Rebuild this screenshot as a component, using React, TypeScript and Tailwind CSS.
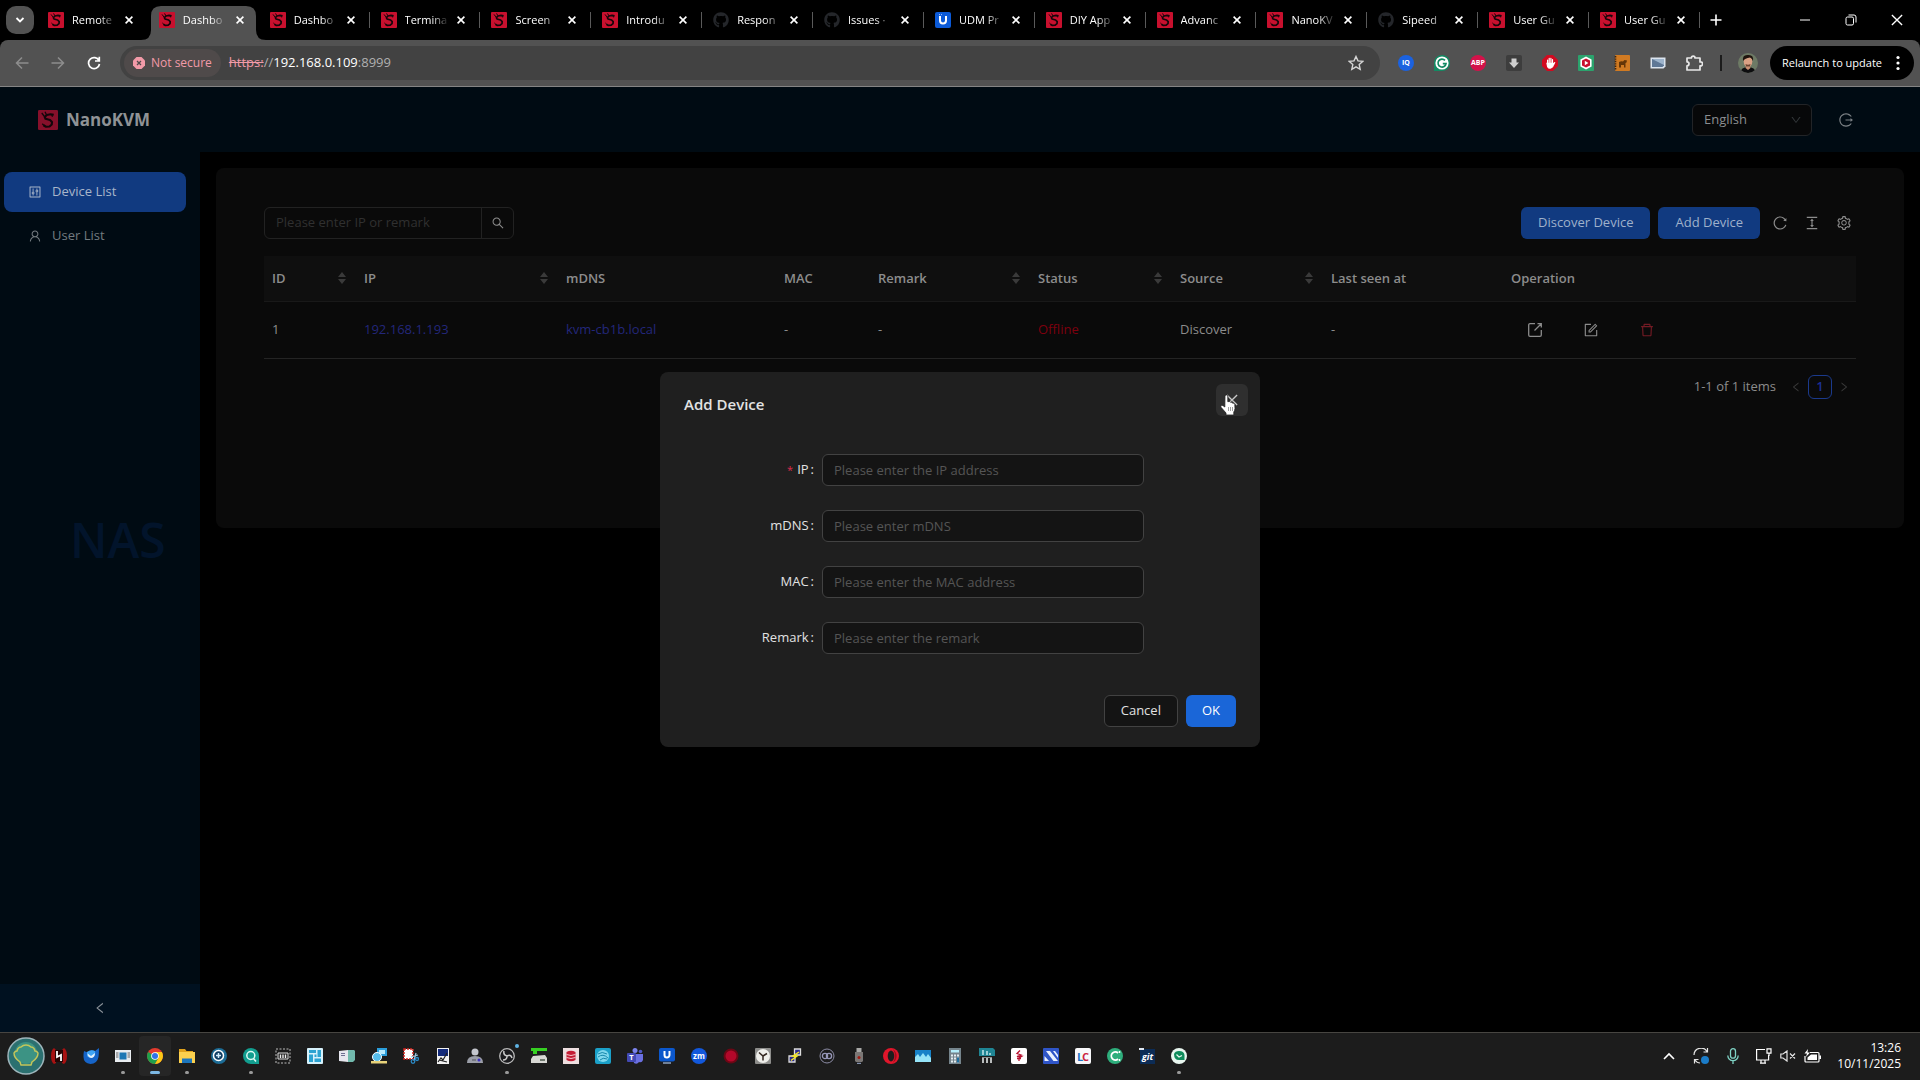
import { useState } from 'react';
import type { ReactNode } from 'react';
import {
  AiOutlineColumnHeight,
  AiOutlineControl,
  AiOutlineDelete,
  AiOutlineDown,
  AiOutlineForm,
  AiOutlineLeft,
  AiOutlineLogout,
  AiOutlineReload,
  AiOutlineRight,
  AiOutlineSearch,
  AiOutlineSetting,
  AiOutlineUser,
} from 'react-icons/ai';
import { FaGithub } from 'react-icons/fa';

// ---------- logos ----------

function SipeedLogo({ className = 'size-4', red = '#c8102e', ink = '#14060a' }: any) {
  return (
    <svg viewBox="0 0 16 16" className={className}>
      <rect width="16" height="16" rx="1" fill={red} />
      <path
        d="M12.6 3.8 10 3.4 7 4 5.4 5.6 6 7l3.6 1 1.6 1.6-.2 2-1.8 1.6-2.8.2-2-1.2"
        fill="none"
        stroke={ink}
        strokeWidth="1.7"
        strokeLinejoin="round"
      />
      <path d="M3 2.4 5 5M5.6 1.4l1.2 2.4M11 3.6l.6 1.8M3.4 11l1.4 1.4" stroke={ink} strokeWidth="1" />
    </svg>
  );
}

function UnifiLogo({ className = 'size-4' }: any) {
  return (
    <svg viewBox="0 0 16 16" className={className}>
      <rect width="16" height="16" rx="2" fill="#0b5ad8" />
      <path d="M5 4v4.6a3 3 0 0 0 6 0V4" fill="none" stroke="#fff" strokeWidth="2" />
      <path d="M4 2.6h1M6 2.6h1" stroke="#9fc4ff" />
    </svg>
  );
}

// ---------- browser ----------

const tabs = [
  { icon: 'sipeed', title: 'Remote' },
  { icon: 'sipeed', title: 'Dashbo', active: true },
  { icon: 'sipeed', title: 'Dashbo' },
  { icon: 'sipeed', title: 'Termina' },
  { icon: 'sipeed', title: 'Screen' },
  { icon: 'sipeed', title: 'Introdu' },
  { icon: 'github', title: 'Respon' },
  { icon: 'github', title: 'Issues ·' },
  { icon: 'unifi', title: 'UDM Pr' },
  { icon: 'sipeed', title: 'DIY App' },
  { icon: 'sipeed', title: 'Advanc' },
  { icon: 'sipeed', title: 'NanoKV' },
  { icon: 'github', title: 'Sipeed' },
  { icon: 'sipeed', title: 'User Gu' },
  { icon: 'sipeed', title: 'User Gu' },
];

function CrossIcon({ className = 'size-2' }: any) {
  return (
    <svg viewBox="0 0 8 8" className={className}>
      <path d="m.6.6 6.8 6.8M7.4.6.6 7.4" stroke="currentColor" strokeWidth="1.6" />
    </svg>
  );
}

function Tab({ icon, title, active, divider }: any) {
  return (
    <div className="relative flex h-10 min-w-0 flex-1 items-center px-[11px]">
      {active && (
        <svg viewBox="0 0 125 34" preserveAspectRatio="none" className="absolute bottom-0 -left-[7px] h-[34px] w-[125px]">
          <path d="M0 34q10 0 10-10V10Q10 0 20 0h85q10 0 10 10v14q0 10 10 10z" fill="#525252" />
        </svg>
      )}
      <span className="relative mr-2 shrink-0">
        {icon === 'sipeed' && <SipeedLogo />}
        {icon === 'unifi' && <UnifiLogo />}
        {icon === 'github' && <FaGithub className="size-4 text-[#24262a]" />}
      </span>
      <span className="relative min-w-0 flex-1 overflow-hidden text-[11px] whitespace-nowrap text-white [mask-image:linear-gradient(to_right,#000_55%,transparent_92%)]">
        {title}
      </span>
      <button aria-label="Close tab" className="relative flex size-4 shrink-0 items-center justify-center text-white">
        <CrossIcon />
      </button>
      {divider && <span className="absolute top-3 right-0 h-4 w-px bg-[#5a5a5a]" />}
    </div>
  );
}

function TabStrip() {
  return (
    <div className="flex h-10 items-center bg-black pl-1.5">
      <button aria-label="Search tabs" className="mr-[3px] flex size-7 shrink-0 items-center justify-center rounded-[10px] bg-[#525252]">
        <svg viewBox="0 0 10 10" className="size-2.5">
          <path d="m1.5 3 3.5 3.5L8.5 3" fill="none" stroke="#fff" strokeWidth="1.8" />
        </svg>
      </button>
      <div className="flex min-w-0 flex-1">
        {tabs.map((tab, index) => (
          <Tab key={index} {...tab} divider={index > 1} />
        ))}
      </div>
      <button aria-label="New tab" className="flex w-8 shrink-0 justify-center text-white">
        <svg viewBox="0 0 12 12" className="size-3">
          <path d="M6 .5v11M.5 6h11" stroke="currentColor" strokeWidth="1.6" />
        </svg>
      </button>
      <div className="ml-[50px] flex shrink-0 text-white">
        <button aria-label="Minimize" className="flex w-[46px] justify-center">
          <svg viewBox="0 0 12 12" className="size-3">
            <path d="M1 6h10" stroke="currentColor" />
          </svg>
        </button>
        <button aria-label="Restore" className="flex w-[46px] justify-center">
          <svg viewBox="0 0 12 12" className="size-3" fill="none" stroke="currentColor">
            <rect x="1" y="3" width="7.5" height="8" rx="1.5" />
            <path d="M3.5 1h5.5a2 2 0 0 1 2 2v5.5" />
          </svg>
        </button>
        <button aria-label="Close" className="flex w-[46px] justify-center">
          <CrossIcon className="size-3 [&_path]:[stroke-width:.9]" />
        </button>
      </div>
    </div>
  );
}

const extensions: { name: string; icon: ReactNode }[] = [
  {
    name: 'IQ',
    icon: (
      <span className="flex size-4 items-center justify-center rounded-full bg-[#1b62e0] text-[7px] font-bold text-white">IQ</span>
    ),
  },
  {
    name: 'Grammar checker',
    icon: (
      <svg viewBox="0 0 16 16" className="size-4">
        <path d="M8 0a8 8 0 0 1 8 8 8 8 0 0 1-8 8H0V8a8 8 0 0 1 8-8z" fill="#138a63" />
        <circle cx="8" cy="8" r="6.6" fill="#fff" />
        <path d="M11 5.4A4 4 0 1 0 12 8.600H8.800" fill="none" stroke="#138a63" strokeWidth="1.700" />
      </svg>
    ),
  },
  {
    name: 'Adblock',
    icon: (
      <span className="flex size-4 items-center justify-center rounded-full bg-[#d3124a] text-[7px] font-bold text-white">ABP</span>
    ),
  },
  {
    name: 'Downloader',
    icon: (
      <svg viewBox="0 0 16 16" className="size-4">
        <rect width="16" height="16" rx="2" fill="#3d3d3d" />
        <path d="M5.5 3.5h5v4H13l-5 5.5-5-5.5h2.5z" fill="#cfcfcf" />
      </svg>
    ),
  },
  {
    name: 'Blocker',
    icon: (
      <svg viewBox="0 0 16 16" className="size-4">
        <path d="M5 0h6l5 5v6l-5 5H5l-5-5V5z" fill="#d20a20" />
        <path
          d="M5.6 9V5M7.2 8V3.4M8.9 8V3.4M10.5 9V4.6M5 8.4h6.2v1.8a3 3 0 0 1-5.6 1.4zM11.5 10l1.2-2.4"
          fill="#fff"
          stroke="#fff"
          strokeWidth="1.2"
          strokeLinecap="round"
        />
      </svg>
    ),
  },
  {
    name: 'Video tools',
    icon: (
      <svg viewBox="0 0 16 16" className="size-4">
        <rect width="16" height="16" rx="1" fill="#2ba36d" />
        <path d="m8 1.4 5.6 3.2v6.8L8 14.6l-5.6-3.2V4.6z" fill="#fff" />
        <path d="m8 3.4 4 2.2v4.8l-4 2.2-4-2.2V5.6z" fill="#c8102e" />
        <path d="m6.8 5.8 3.6 2.2-3.6 2.2z" fill="#fff" />
      </svg>
    ),
  },
  {
    name: 'Notebook',
    icon: (
      <svg viewBox="0 0 16 16" className="size-4">
        <rect x="1" width="15" height="16" rx="1" fill="#d07a22" />
        <path d="M1.5 1v14" stroke="#3a2410" strokeWidth="1.6" strokeDasharray="1.4 1" />
        <path d="M5 12.500V7q2-1 4-.500L10.500 5l2.500.500-.500 2-1 .500v4.500H10V10H7v2.500z" fill="#643608" />
      </svg>
    ),
  },
  {
    name: 'Screenshot',
    icon: (
      <svg viewBox="0 0 16 16" className="size-4">
        <path d="M.5 2.5h15v9l-2 2H.5z" fill="#dbe4ee" />
        <path d="M2 4h12v6.5l-1.5 1.5H2z" fill="#5f7896" />
        <path d="m2 4 12 6V4z" fill="#9db4cc" />
      </svg>
    ),
  },
  {
    name: 'Extensions',
    icon: (
      <svg viewBox="0 0 18 18" className="size-[18px]" fill="none" stroke="#e8e8e8" strokeWidth="1.7" strokeLinejoin="round">
        <path d="M2 4h4.4a1.8 1.8 0 1 1 3.6 0H15v4a2 2 0 1 1 0 3.8V16H2v-4.2a2 2 0 0 0 0-4z" />
      </svg>
    ),
  },
];

function AddressBar() {
  return (
    <div className="bg-black">
      <div className="flex h-[47px] items-center rounded-t-lg border-b border-[#858585] bg-[#525252] pl-1">
        <button aria-label="Back" className="flex w-9 justify-center text-[#8d8d8d]">
          <svg viewBox="0 0 14 14" className="size-3.5" fill="none" stroke="currentColor" strokeWidth="1.5">
            <path d="M13.5 7H1.5M7 1.5 1.5 7 7 12.5" />
          </svg>
        </button>
        <button aria-label="Forward" className="flex w-9 justify-center text-[#8d8d8d]">
          <svg viewBox="0 0 14 14" className="size-3.5" fill="none" stroke="currentColor" strokeWidth="1.5">
            <path d="M.5 7h12M7 1.5 12.5 7 7 12.5" />
          </svg>
        </button>
        <button aria-label="Reload" className="flex w-9 justify-center text-white">
          <svg viewBox="0 0 14 14" className="size-3.5" fill="none" stroke="currentColor" strokeWidth="1.7">
            <path d="M12 4.6A5.5 5.5 0 1 0 12.500 8M12.300.8v4.200H8" />
          </svg>
        </button>
        <div className="ml-2 flex h-[34px] min-w-0 flex-1 items-center rounded-full bg-[#424242] pr-4 pl-1">
          <button className="flex h-7 items-center gap-1.5 rounded-full bg-[#4f4a4a] px-[9px] text-[12px] font-medium text-[#f29aa8]">
            <svg viewBox="0 0 12 12" className="size-3">
              <path d="M3.5 0h5L12 3.500v5L8.500 12h-5L0 8.500v-5z" fill="#f29aa8" />
              <path d="m4 4 4 4M8 4 4 8" stroke="#4f4a4a" strokeWidth="1.300" />
            </svg>
            Not secure
          </button>
          <div className="ml-2 flex-1 text-[13px] whitespace-nowrap text-[#b0b0b0]">
            <span className="text-[#f29aa8] line-through">https:</span>
            <span>//</span>
            <span className="text-white">192.168.0.109</span>
            <span>:8999</span>
          </div>
          <button aria-label="Bookmark this tab">
            <svg viewBox="0 0 16 16" className="size-4">
              <path
                d="m8 1.500 2 4.400 4.700.5-3.500 3.200 1 4.700L8 11.900l-4.200 2.400 1-4.700L1.300 6.400 6 5.900z"
                fill="none"
                stroke="#d6d6d6"
                strokeWidth="1.400"
              />
            </svg>
          </button>
        </div>
        <div className="ml-2 flex shrink-0">
          {extensions.map(({ name, icon }) => (
            <button key={name} aria-label={name} className="flex w-9 items-center justify-center">
              {icon}
            </button>
          ))}
        </div>
        <span className="mx-2 h-4 w-0.5 shrink-0 bg-[#1c1c1c]" />
        <button aria-label="Profile" className="flex w-9 shrink-0 justify-center">
          <svg viewBox="0 0 20 20" className="size-5 rounded-full">
            <rect width="20" height="20" fill="#6d7a65" />
            <path d="M2 20q1-6 8-6t8 6z" fill="#0d0d0f" />
            <path d="M8 12h4l.5 3L10 17l-2.500-2z" fill="#c98f72" />
            <ellipse cx="10" cy="8.500" rx="4.300" ry="5.500" fill="#d9a184" />
            <path d="M5 8Q4 1.500 10 2q6-.5 5 6-1-3-3-3.500Q7 5 5 8z" fill="#20150f" />
            <path d="M7.500 11q2.500 1.500 5 0l-.5 2.500H8z" fill="#6b4330" />
          </svg>
        </button>
        <button className="mr-1.5 ml-1 flex h-[34px] w-36 shrink-0 items-center justify-between rounded-full bg-black pr-3.5 pl-3 text-[11px] text-white">
          <span className="whitespace-nowrap">Relaunch to update</span>
          <svg viewBox="0 0 4 16" className="h-4 w-1" fill="#fff">
            <circle cx="2" cy="2.500" r="1.600" />
            <circle cx="2" cy="8" r="1.600" />
            <circle cx="2" cy="13.500" r="1.600" />
          </svg>
        </button>
      </div>
    </div>
  );
}

// ---------- dashboard ----------

function Header() {
  return (
    <header className="flex h-[65px] shrink-0 items-center justify-between bg-[#000b13] pr-[66px] pl-[38px]">
      <a href="#" className="flex items-center gap-2 text-[17px] font-bold text-[#8f9396]">
        <SipeedLogo className="size-5" red="#86102b" ink="#12060a" />
        NanoKVM
      </a>
      <div className="flex items-center gap-[26px]">
        <label className="relative block">
          <span className="sr-only">Language</span>
          <select className="h-8 w-[120px] appearance-none rounded-md border border-[#222427] bg-[#070809] px-[11px] text-[13px] text-[#8b8e90]">
            <option>English</option>
          </select>
          <AiOutlineDown className="pointer-events-none absolute top-2.5 right-2.5 size-3 text-[#33373a]" />
        </label>
        <button aria-label="Log out" className="text-[#7b8185]">
          <AiOutlineLogout className="size-4" />
        </button>
      </div>
    </header>
  );
}

function Sidebar() {
  return (
    <aside className="flex w-[200px] shrink-0 flex-col bg-[#000b13]">
      <nav className="flex flex-col gap-1 pt-5 pr-3.5 pl-1 text-[13px]">
        <a href="#" className="flex h-10 items-center gap-2.5 rounded-lg bg-[#113a80] px-6 text-[#a9b6ca]">
          <AiOutlineControl className="size-3.5" />
          Device List
        </a>
        <a href="#" className="flex h-10 items-center gap-2.5 rounded-lg px-6 text-[#737b80]">
          <AiOutlineUser className="size-3.5" />
          User List
        </a>
      </nav>
      <div className="flex-1 pt-[252px] pl-[70px] text-[48px] leading-[64px] font-semibold text-[#02142b]">NAS</div>
      <button aria-label="Collapse menu" className="flex h-12 shrink-0 items-center justify-center bg-[#001120] text-[#8a9299]">
        <AiOutlineLeft className="size-3.5" />
      </button>
    </aside>
  );
}

function Sorter() {
  return (
    <svg viewBox="0 0 8 12" className="h-3 w-2" fill="#3a3a3a">
      <path d="M4 0 8 5H0zM4 12 0 7h8z" />
    </svg>
  );
}

const columns = [
  { title: 'ID', width: 'w-[92px]', sortable: true },
  { title: 'IP', width: 'w-[202px]', sortable: true },
  { title: 'mDNS', width: 'w-[218px]' },
  { title: 'MAC', width: 'w-[94px]' },
  { title: 'Remark', width: 'w-[160px]', sortable: true },
  { title: 'Status', width: 'w-[142px]', sortable: true },
  { title: 'Source', width: 'w-[151px]', sortable: true },
  { title: 'Last seen at', width: 'w-[180px]' },
  { title: 'Operation', width: '' },
];

function DeviceTable() {
  return (
    <table className="mt-[17px] w-full table-fixed text-left text-[13px] text-[#8c8c8c]">
      <thead>
        <tr className="h-[45px] border-b border-[#191919] bg-[#0f0f0f]">
          {columns.map(({ title, width, sortable }) => (
            <th key={title} className={`${width} px-2 font-semibold`}>
              <span className="flex items-center justify-between pr-0.5">
                {title}
                {sortable && <Sorter />}
              </span>
            </th>
          ))}
        </tr>
      </thead>
      <tbody>
        <tr className="h-[57px] border-b border-[#242424]">
          <td className="px-2">1</td>
          <td className="px-2">
            <a href="#" className="text-[#23277a]">192.168.1.193</a>
          </td>
          <td className="px-2">
            <a href="#" className="text-[#23277a]">kvm-cb1b.local</a>
          </td>
          <td className="px-2">-</td>
          <td className="px-2">-</td>
          <td className="px-2 text-[#7e000e]">Offline</td>
          <td className="px-2">Discover</td>
          <td className="px-2">-</td>
          <td className="px-2">
            <div className="flex gap-2">
              <button aria-label="Open" className="flex w-12 justify-center">
                <svg viewBox="0 0 16 16" className="size-4" fill="none" stroke="currentColor" strokeWidth="1.300">
                  <path d="M8 1.700H3A1.300 1.300 0 0 0 1.700 3v10A1.300 1.300 0 0 0 3 14.300h10a1.300 1.300 0 0 0 1.300-1.300V8M7.500 8.500l6.500-6.500M10.500 1.700h3.800v3.800" />
                </svg>
              </button>
              <button aria-label="Edit" className="flex w-12 justify-center">
                <AiOutlineForm className="size-4" />
              </button>
              <button aria-label="Delete" className="flex w-12 justify-center text-[#741b24]">
                <AiOutlineDelete className="size-4" />
              </button>
            </div>
          </td>
        </tr>
      </tbody>
    </table>
  );
}

function DevicePanel({ onAdd }: any) {
  return (
    <section className="min-h-[360px] rounded-lg bg-[#0a0a0a] px-12 pt-[39px] text-[13px] text-[#8c8c8c]">
      <div className="flex items-center justify-between">
        <form className="flex h-8 w-[250px] rounded-md border border-[#222]">
          <input
            aria-label="Search devices"
            placeholder="Please enter IP or remark"
            className="min-w-0 flex-1 bg-transparent px-[11px] placeholder:text-[#303030]"
          />
          <button type="button" aria-label="Search" className="flex w-8 items-center justify-center border-l border-[#222]">
            <AiOutlineSearch className="size-3.5" />
          </button>
        </form>
        <div className="flex items-center gap-2">
          <button className="h-8 rounded-md bg-[#113a80] px-[17px] text-[#9fb1cb]">Discover Device</button>
          <button className="h-8 rounded-md bg-[#113a80] px-[17px] text-[#9fb1cb]" onClick={onAdd}>
            Add Device
          </button>
          <button aria-label="Refresh" className="flex w-6 justify-center">
            <AiOutlineReload className="size-4" />
          </button>
          <button aria-label="Density" className="flex w-6 justify-center">
            <AiOutlineColumnHeight className="size-4" />
          </button>
          <button aria-label="Column settings" className="flex w-6 justify-center">
            <AiOutlineSetting className="size-4" />
          </button>
        </div>
      </div>
      <DeviceTable />
      <div className="mt-4 flex items-center justify-end">
        <span className="mr-2">1-1 of 1 items</span>
        <button aria-label="Previous page" className="flex size-6 items-center justify-center text-[#3a3a3a]">
          <AiOutlineLeft className="size-3" />
        </button>
        <button className="size-6 rounded-md border border-[#1b3a8c] font-semibold text-[#1b2f94]">1</button>
        <button aria-label="Next page" className="flex size-6 items-center justify-center text-[#3a3a3a]">
          <AiOutlineRight className="size-3" />
        </button>
      </div>
    </section>
  );
}

const fields = [
  { id: 'ip', label: 'IP', placeholder: 'Please enter the IP address', required: true },
  { id: 'mdns', label: 'mDNS', placeholder: 'Please enter mDNS' },
  { id: 'mac', label: 'MAC', placeholder: 'Please enter the MAC address' },
  { id: 'remark', label: 'Remark', placeholder: 'Please enter the remark' },
];

function HandPointer() {
  return (
    <svg viewBox="0 0 17 22" className="absolute top-2.5 left-1 h-[22px] w-[17px]">
      <path
        d="M5 1.500q1.500-1.300 2.800.2v6l1.400-.2q.9 0 1.300.8 1.500-.4 2 .7 2-.2 2.300 1.300l.2 4.200q-.2 2-1.200 3.500V21H6v-2L1.200 13.500q-1-1.600.4-2.300 1-.3 3.200 1.800z"
        fill="#fff"
        stroke="#222"
        strokeWidth=".8"
      />
      <path d="M8.500 13v4M10.500 13v4M12.500 13v4" stroke="#777" strokeWidth=".7" />
    </svg>
  );
}

function AddDeviceModal({ onClose }: any) {
  return (
    <div className="absolute inset-0 flex items-center justify-center">
      <form
        role="dialog"
        aria-label="Add Device"
        className="relative w-[600px] rounded-lg bg-[#1f1f1f] px-6 py-5 text-[13px] text-[#e2e2e2]"
      >
        <h2 className="text-[15px] leading-6 font-semibold">Add Device</h2>
        <button type="button" aria-label="Close" onClick={onClose} className="absolute top-3 right-3 flex size-8 items-center justify-center rounded-md bg-[#2f2f2f] text-[#c8c8c8]">
          <CrossIcon className="size-3 [&_path]:[stroke-width:.9]" />
          <HandPointer />
        </button>
        <div className="mt-[38px] flex flex-col gap-6">
          {fields.map(({ id, label, placeholder, required }) => (
            <div key={id} className="flex items-center">
              <label htmlFor={id} className="w-[138px] pr-2 text-right">
                {required && <span className="mr-1 text-[11px] text-[#dc2c4c]">*</span>}
                {label}
                <span className="ml-0.5">:</span>
              </label>
              <input
                id={id}
                placeholder={placeholder}
                className="h-8 w-[322px] rounded-md border border-[#424242] bg-[#141414] px-[11px] placeholder:text-[#555]"
              />
            </div>
          ))}
        </div>
        <div className="mt-[41px] flex justify-end gap-2">
          <button type="button" onClick={onClose} className="h-8 rounded-md border border-[#424242] bg-[#141414] px-4">
            Cancel
          </button>
          <button type="button" className="h-8 rounded-md bg-[#1a66d8] px-4 text-white">
            OK
          </button>
        </div>
      </form>
    </div>
  );
}

// ---------- taskbar ----------

const apps: { name: string; state?: 'open' | 'active'; icon: ReactNode }[] = [
  {
    name: 'Reader',
    icon: (
      <>
        <path d="M3 0Q0 2 0 8t3 8l2-1V2zM13 0q3 2 3 8t-3 8l-2-1V2z" fill="#a81212" />
        <path d="M4 2h8v12H4z" fill="#270606" />
        <path d="M6 3v6l4-2v6" fill="none" stroke="#fff" strokeWidth="1.800" />
      </>
    ),
  },
  {
    name: 'Thunderbird',
    icon: (
      <>
        <path d="M1 3q2 1 3 1 4-3 8-1l4-3q0 5-.5 9-1.500 7-8 7Q.5 15 .5 9 .3 6 1 3z" fill="#1664c8" />
        <path d="M4 4q4-3 8-1 1 4-2 6-4 2-6-1z" fill="#3fa4f4" />
        <path d="M4.500 5.500 8 8l4-3q0 4-3 5-4 0-4.500-4.500z" fill="#e4f0fb" />
      </>
    ),
  },
  {
    name: 'Editor',
    state: 'open',
    icon: (
      <>
        <rect y="2" width="16" height="12" fill="#e9edf0" />
        <rect x="4.500" y="4.500" width="7" height="7" fill="#1e78b4" />
        <path d="M1 5h2.500M1 7h2.500M1 9h2.500M12.500 5H15M12.500 7H15M12.500 9H15" stroke="#444" strokeWidth=".8" />
      </>
    ),
  },
  {
    name: 'Chrome',
    state: 'active',
    icon: (
      <>
        <circle cx="8" cy="8" r="8" fill="#e33b2e" />
        <path d="M8 8 1.100 4A8 8 0 0 0 8 16l3.500-6z" fill="#1fa04c" />
        <path d="M8 16a8 8 0 0 0 6.900-12H8l3.500 6z" fill="#fbc816" />
        <circle cx="8" cy="8" r="3.800" fill="#fff" />
        <circle cx="8" cy="8" r="3" fill="#2f73e8" />
      </>
    ),
  },
  {
    name: 'Files',
    state: 'open',
    icon: (
      <>
        <path d="M0 1h6l1.500 2H14v3H0z" fill="#e0a21c" />
        <path d="M0 4h16v11H0z" fill="#fbd04e" />
        <path d="M3 10.500h10V15H3z" fill="#1c75bb" />
      </>
    ),
  },
  {
    name: 'Remote view',
    icon: (
      <>
        <circle cx="8" cy="8" r="8" fill="#1c6c96" />
        <circle cx="7.500" cy="7.500" r="5" fill="#0f3e63" stroke="#fff" strokeWidth="1.500" />
        <path d="M7.500 5v5M5 7.500h5" stroke="#d4eefc" strokeWidth="1.500" />
      </>
    ),
  },
  {
    name: 'Search tool',
    state: 'open',
    icon: (
      <>
        <path d="M8 0a8 8 0 0 1 8 8v8H8A8 8 0 0 1 8 0z" fill="#129e8f" />
        <circle cx="7.800" cy="7.500" r="4" fill="none" stroke="#dffaf4" strokeWidth="1.500" />
        <path d="m10.500 10.500 2.500 3" stroke="#dffaf4" strokeWidth="1.500" />
      </>
    ),
  },
  {
    name: 'Memory',
    icon: (
      <>
        <rect x="1" y="1" width="14" height="14" fill="none" stroke="#bbb" strokeDasharray="2 1.500" />
        <path d="M3 5h10v6H3z" fill="none" stroke="#ddd" />
        <path d="M5.500 10V6.500M8 10V6.500M10.500 10V6.500" stroke="#eee" strokeWidth="1.400" />
      </>
    ),
  },
  {
    name: 'Panels',
    icon: (
      <>
        <rect width="16" height="16" rx="1" fill="#d6f1fb" />
        <path d="M2 2h7v3H2zM2 6.500h4V14H2zM10.500 2H14v7h-3.500zM7.500 10.500H14V14H7.500zM7.500 6.500H9.500V9h-2z" fill="#2ba3d2" />
      </>
    ),
  },
  {
    name: 'Server',
    icon: (
      <>
        <path d="m0 3 9-1v12l-9-1z" fill="#e6e6ee" />
        <path d="M9 2h6l1 1v9l-2 2H9z" fill="#71b9ad" />
        <path d="M2 5.500h4M2 7.500h4" stroke="#6f6f92" />
      </>
    ),
  },
  {
    name: 'Remote desktop',
    icon: (
      <>
        <path d="M6 0h10v8H6z" fill="#2b9edb" />
        <path d="M8 2h6v4H8z" fill="#b8ecff" />
        <circle cx="6" cy="9" r="4.500" fill="#57bdea" stroke="#fff" />
        <path d="M0 13h16v2.500H0z" fill="#e8d27a" />
      </>
    ),
  },
  {
    name: 'Snipping',
    icon: (
      <>
        <rect x="1" y="1" width="9" height="10" fill="#fff" stroke="#d4261f" strokeWidth="1.500" strokeDasharray="2 1" />
        <path d="m8 9 7-2M11 13l2-8" stroke="#9bc3da" strokeWidth="1.300" />
        <circle cx="10" cy="13.500" r="1.800" fill="none" stroke="#2a88c4" strokeWidth="1.300" />
        <circle cx="14" cy="11" r="1.500" fill="none" stroke="#2a88c4" strokeWidth="1.300" />
      </>
    ),
  },
  {
    name: 'Paint',
    icon: (
      <>
        <rect x="2" width="12" height="16" fill="#f2f2f2" />
        <path d="M3 1h10v7H3z" fill="#132a7a" />
        <path d="m3 14 3-4 2 2 4-7M4 12l8 2" stroke="#222" strokeWidth="1.200" fill="none" />
      </>
    ),
  },
  {
    name: 'Users',
    icon: (
      <>
        <circle cx="8" cy="4" r="3.500" fill="#c4c6cd" />
        <path d="M0 15q0-7 8-7t8 7z" fill="#9b9ea8" />
        <circle cx="12" cy="12" r="1.500" fill="#3d33c4" />
        <path d="M5 12h4" stroke="#50525c" />
      </>
    ),
  },
  {
    name: 'OBS',
    state: 'open',
    icon: (
      <>
        <circle cx="8" cy="8" r="7.300" fill="#1b1b1e" stroke="#b9b9b9" strokeWidth="1.300" />
        <path d="M8 8q-4-1-3-5M8 8q4-2 5 2M8 8q0 4-4 4" fill="none" stroke="#c9c9c9" strokeWidth="1.500" />
      </>
    ),
  },
  {
    name: 'Drive',
    icon: (
      <>
        <path d="M0 0h16v3H6v3H2V3H0z" fill="#36d022" />
        <path d="m2 8 12-1 2 3v5H0v-4z" fill="#d8d8d4" />
        <path d="M9 12h5" stroke="#4c5a4c" strokeWidth="1.500" />
      </>
    ),
  },
  {
    name: 'Database',
    icon: (
      <>
        <rect width="16" height="16" fill="#eedfe0" />
        <path d="M3.500 4q4.500-2.500 9 0v8q-4.500 2.500-9 0z" fill="#c41c34" />
        <path d="M3.500 6.500q4.500 2 9 0M3.500 9.500q4.500 2 9 0" fill="none" stroke="#f4c4ca" />
      </>
    ),
  },
  {
    name: 'Globe',
    icon: (
      <>
        <rect width="16" height="16" rx="2" fill="#1ba0c8" />
        <circle cx="8" cy="8" r="6" fill="#7fd8ee" />
        <path d="M3 6q4-3 9 0M3 9q5-4 10 1M5 12q3-3 7-1" fill="none" stroke="#1788ac" />
      </>
    ),
  },
  {
    name: 'Teams',
    icon: (
      <>
        <circle cx="8" cy="2.500" r="2.500" fill="#7b83eb" />
        <circle cx="13.500" cy="3.500" r="1.800" fill="#5059c9" />
        <path d="M5 6h11v6q-1 3-4 2-2 3-5 1z" fill="#6a6fe0" />
        <rect y="5" width="9" height="9" rx="1" fill="#4349b4" />
        <text x="4.500" y="12" fontSize="7.500" fontWeight="700" textAnchor="middle" fill="#fff">T</text>
      </>
    ),
  },
  {
    name: 'UniFi',
    icon: (
      <>
        <rect width="16" height="13.500" rx="2" fill="#0b57cc" />
        <path d="M5.500 3v4a2.500 2.500 0 0 0 5 0V3" fill="none" stroke="#fff" strokeWidth="2" />
        <path d="M4 15h8" stroke="#9fb8dc" strokeWidth="1.300" />
      </>
    ),
  },
  {
    name: 'Zoom',
    icon: (
      <>
        <circle cx="8" cy="8" r="8" fill="#1258dc" />
        <text x="8" y="10.500" fontSize="8" fontWeight="700" textAnchor="middle" fill="#fff">zm</text>
      </>
    ),
  },
  {
    name: 'Recorder',
    icon: (
      <>
        <circle cx="8" cy="8" r="7.500" fill="#6b0715" />
        <circle cx="8" cy="8" r="5.500" fill="#b3082a" />
      </>
    ),
  },
  {
    name: 'Clock',
    icon: (
      <>
        <rect width="16" height="16" rx="1" fill="#8d8d8b" />
        <circle cx="8" cy="8" r="7" fill="#eeeeea" />
        <path d="M4 4.500 8 8l4-2.500M8 8v4.500" fill="none" stroke="#33261f" strokeWidth="1.500" />
      </>
    ),
  },
  {
    name: 'PuTTY',
    icon: (
      <>
        <path d="M7.500 1h6v6h-6zM2 8h6v6H2z" fill="#2c2a8e" stroke="#dcdcdc" strokeWidth="1.300" />
        <path d="M12 4 6 8h4l-6 4.500" fill="none" stroke="#f4e622" strokeWidth="1.500" />
      </>
    ),
  },
  {
    name: 'Rings',
    icon: (
      <>
        <circle cx="8" cy="8" r="7" fill="none" stroke="#8b8ba4" />
        <circle cx="6" cy="8" r="2.600" fill="none" stroke="#9797b8" strokeWidth="1.300" />
        <circle cx="10" cy="8" r="2.600" fill="none" stroke="#9797b8" strokeWidth="1.300" />
      </>
    ),
  },
  {
    name: 'USB key',
    icon: (
      <>
        <path d="M5.500 0h5v4h-5z" fill="#a9a9a7" />
        <path d="M4 4h8v9l-1 1H5l-1-1z" fill="#7b7775" />
        <circle cx="8" cy="9.500" r="1.500" fill="#a11c12" />
        <path d="M6 15.300h4" stroke="#9fb0d4" />
      </>
    ),
  },
  {
    name: 'Opera',
    icon: (
      <>
        <circle cx="8" cy="8" r="8" fill="#e0162b" />
        <ellipse cx="8" cy="8" rx="3.300" ry="5.400" fill="#1d1d1d" />
        <path d="M10 1.300a8 8 0 0 1 0 13.400q4-6.700 0-13.400z" fill="#9b0b1c" />
      </>
    ),
  },
  {
    name: 'Monitor',
    icon: (
      <>
        <rect y="2" width="16" height="12" fill="#1782c8" />
        <path d="M0 14V9l3-3 2 3 3-4 3 4 2-3 3 4v4z" fill="#95e4f8" />
      </>
    ),
  },
  {
    name: 'Calculator',
    icon: (
      <>
        <rect x="2" width="12" height="16" fill="#75848c" />
        <path d="M4 2h8v2.500H4z" fill="#b5eefa" />
        <path d="M4 7.500h8M4 10.500h8M4 13.500h8" stroke="#e4eef2" strokeWidth="1.800" strokeDasharray="2 1" />
        <path d="M10 9.500h2v5h-2z" fill="#1e6fa0" />
      </>
    ),
  },
  {
    name: 'Network',
    icon: (
      <>
        <path d="M0 0h14l2 2v6H0z" fill="#1f8594" />
        <path d="M4 2v5M8 3v4M11 5v2" stroke="#d9f4f6" strokeWidth="1.300" />
        <path d="M4 10v5M8 10v5M12 10v5" stroke="#b9bdbd" strokeWidth="2" />
        <path d="M3 9.500h10" stroke="#8c9090" />
      </>
    ),
  },
  {
    name: 'Sketch',
    icon: (
      <>
        <rect width="16" height="16" rx="2" fill="#fff" />
        <path d="M9 2.500 6 5.500l4 1.500-4 1.500h4.500L8 10v3M6 10.500h4" fill="none" stroke="#b81432" strokeWidth="1.300" />
      </>
    ),
  },
  {
    name: 'Mesh',
    icon: (
      <>
        <rect width="16" height="16" rx="1" fill="#2f55c8" />
        <path d="M1.500 13V8l4.500 5zM3 3h4l8 10h-4.500zM10 3h2l3 4v3z" fill="#e9f0ff" />
      </>
    ),
  },
  {
    name: 'LC',
    icon: (
      <>
        <rect width="16" height="16" rx="2" fill="#f8f8fa" />
        <text x="5" y="12.500" fontSize="11" fontWeight="700" textAnchor="middle" fill="#2474c4">L</text>
        <text x="10.500" y="12.500" fontSize="11" fontWeight="700" textAnchor="middle" fill="#cc2340">C</text>
      </>
    ),
  },
  {
    name: 'Camtasia',
    icon: (
      <>
        <circle cx="8" cy="8" r="8" fill="#2eae7c" />
        <path d="M11 5a4 4 0 1 0 0 6" fill="none" stroke="#fff" strokeWidth="1.800" />
        <path d="M12.500 3v2M12.500 11v2" stroke="#fff" strokeWidth="1.500" />
      </>
    ),
  },
  {
    name: 'Git',
    icon: (
      <>
        <rect x="1" y="1" width="15" height="15" fill="#0c2c56" />
        <path d="M0 0h5v2H0z" fill="#dfe6f0" />
        <text x="8.500" y="11.500" fontSize="9" fontWeight="700" fontStyle="italic" textAnchor="middle" fill="#fff">git</text>
      </>
    ),
  },
  {
    name: 'Chat',
    state: 'open',
    icon: (
      <>
        <circle cx="8" cy="8" r="8" fill="#e9f7f0" />
        <path d="M3 6q1-3 5-3 5 0 5.500 4v5H8q-5 0-5-6z" fill="#0f8d5c" />
        <path d="M5.500 6.500 8 9l3-1.500" fill="none" stroke="#e9f7f0" strokeWidth="1.200" />
      </>
    ),
  },
];

function Taskbar() {
  return (
    <footer className="flex h-12 shrink-0 items-center justify-between border-t border-[#474541] bg-[#1c1c1c] pb-px pl-[9px]">
      <div className="flex items-center">
        <button aria-label="Start" className="relative flex w-[34px] shrink-0 justify-center">
          <svg viewBox="0 0 38 38" className="size-[38px] shrink-0">
            <circle cx="19" cy="19" r="18" fill="#2b7070" stroke="#9db5bb" strokeWidth="1.500" />
            <circle cx="19" cy="16" r="11" fill="#3c9384" />
            <path
              d="M14 28h10l1-3q6-4 6-9-1-2-3-2-1-4-4-4-2-2-5-2t-5 2q-3 0-4 4-2 0-3 2 0 5 6 9z"
              fill="none"
              stroke="#c3c65a"
              strokeWidth="1.500"
            />
          </svg>
        </button>
        {apps.map(({ name, state, icon }) => (
          <button
            key={name}
            aria-label={name}
            className={
              state === 'active'
                ? 'relative flex h-10 w-8 items-center justify-center rounded bg-[#262626]'
                : 'relative flex h-10 w-8 items-center justify-center'
            }
          >
            <svg viewBox="0 0 16 16" className="size-4">
              {icon}
            </svg>
            {name === 'OBS' && <span className="absolute top-2 right-1 size-1 rounded-full bg-[#5fb4e4]" />}
            {state === 'open' && <span className="absolute bottom-0.5 h-[3px] w-1 rounded-full bg-[#9a9a9a]" />}
            {state === 'active' && <span className="absolute bottom-0.5 h-[3px] w-2.5 rounded-full bg-[#7cb8e4]" />}
          </button>
        ))}
      </div>
      <div className="flex items-center pr-[19px] text-white">
        <button aria-label="Hidden icons" className="flex w-8 justify-center">
          <svg viewBox="0 0 12 8" className="h-2 w-3" fill="none" stroke="currentColor" strokeWidth="1.600">
            <path d="m1 7 5-5 5 5" />
          </svg>
        </button>
        <button aria-label="Sync" className="flex w-8 justify-center">
          <svg viewBox="0 0 16 16" className="size-4" fill="none" stroke="#e4e4e4" strokeWidth="1.200">
            <path d="M1 7a7 7 0 0 1 13-3.500M14.500 0v4h-4M1.500 15.500v-4h4M2 12q2 3 5 3" />
            <circle cx="12" cy="12" r="4" fill="#1b7cc8" stroke="none" />
          </svg>
        </button>
        <button aria-label="Microphone" className="flex w-8 justify-center">
          <svg viewBox="0 0 12 16" className="h-4 w-3" fill="none" stroke="#7fd2c4" strokeWidth="1.300">
            <rect x="3.500" y=".7" width="5" height="9.500" rx="2.500" />
            <path d="M.8 7.500a5.200 5.200 0 0 0 10.400 0M6 12.700V16" />
          </svg>
        </button>
        <button aria-label="Network, volume and battery" className="flex items-center gap-2 pl-1.5">
          <svg viewBox="0 0 17 16" className="h-4 w-[17px]" fill="none" stroke="#fff" strokeWidth="1.200">
            <path d="M10 1.500H1.600v10.500h12V7M5 15.200h6M6 12v3M10 12v3" />
            <path d="M12 .8h4v4.400h-4zM14 5v3" />
          </svg>
          <svg viewBox="0 0 16 12" className="h-3 w-4" fill="none" stroke="#e4e4e4" strokeWidth="1.200">
            <path d="M.8 4v4H3l4 3V1L3 4zM10 3.500l5 5M15 3.500l-5 5" />
          </svg>
          <svg viewBox="0 0 17 14" className="h-3.5 w-[17px]">
            <path d="M6 3.500h8q1 0 1 1V12q0 1-1 1H2q-1 0-1-1V7" fill="none" stroke="#fff" strokeWidth="1.200" />
            <path d="M3.500 8.500 7 5.500h6V11H3.500zM15.300 6.500H17v3.500h-1.700z" fill="#fff" />
            <path d="M4 0 .5 4.500H3L2 8l4-4.500H3.500z" fill="#fff" />
          </svg>
        </button>
        <div className="ml-4 text-right text-[12px] leading-4">
          <div>13:26</div>
          <div>10/11/2025</div>
        </div>
      </div>
    </footer>
  );
}

export default function App() {
  const [modalOpen, setModalOpen] = useState(true);

  return (
    <div className="flex min-h-screen flex-col bg-black font-['Open_Sans','Noto_Sans',sans-serif]">
      <TabStrip />
      <AddressBar />
      <div className="relative flex flex-1 flex-col">
        <Header />
        <div className="flex flex-1">
          <Sidebar />
          <main className="min-w-0 flex-1 p-4">
            <DevicePanel onAdd={() => setModalOpen(true)} />
          </main>
        </div>
        {modalOpen && <AddDeviceModal onClose={() => setModalOpen(false)} />}
      </div>
      <Taskbar />
    </div>
  );
}
